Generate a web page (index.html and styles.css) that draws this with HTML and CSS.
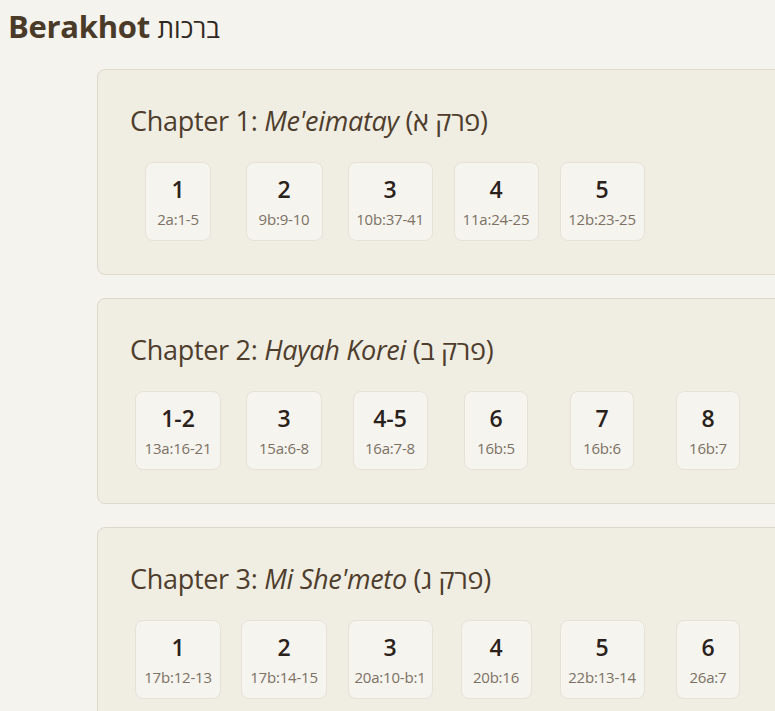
FILE: index.html
```html
<!DOCTYPE html>
<html lang="en">
<head>
<meta charset="utf-8">
<title>Berakhot</title>
<link rel="stylesheet" href="styles.css">
</head>
<body>
<div class="page">
  <h1 class="title">Berakhot <span class="title-he" lang="he">ברכות</span></h1>

  <section class="chapter">
    <h2 class="chapter-title">Chapter 1: <em>Me'eimatay</em> (<span lang="he">פרק א</span>)</h2>
    <div class="mishnayot">
      <a class="mishna w66"><span class="num">1</span><span class="ref">2a:1-5</span></a>
      <a class="mishna w77"><span class="num">2</span><span class="ref">9b:9-10</span></a>
      <a class="mishna w85"><span class="num">3</span><span class="ref">10b:37-41</span></a>
      <a class="mishna w85"><span class="num">4</span><span class="ref">11a:24-25</span></a>
      <a class="mishna w85"><span class="num">5</span><span class="ref">12b:23-25</span></a>
    </div>
  </section>

  <section class="chapter">
    <h2 class="chapter-title">Chapter 2: <em>Hayah Korei</em> (<span lang="he">פרק ב</span>)</h2>
    <div class="mishnayot">
      <a class="mishna w86"><span class="num">1-2</span><span class="ref">13a:16-21</span></a>
      <a class="mishna w76"><span class="num">3</span><span class="ref">15a:6-8</span></a>
      <a class="mishna w75"><span class="num">4-5</span><span class="ref">16a:7-8</span></a>
      <a class="mishna w64"><span class="num">6</span><span class="ref">16b:5</span></a>
      <a class="mishna w64"><span class="num">7</span><span class="ref">16b:6</span></a>
      <a class="mishna w64"><span class="num">8</span><span class="ref">16b:7</span></a>
    </div>
  </section>

  <section class="chapter">
    <h2 class="chapter-title">Chapter 3: <em>Mi She'meto</em> (<span lang="he">פרק ג</span>)</h2>
    <div class="mishnayot">
      <a class="mishna w86"><span class="num">1</span><span class="ref">17b:12-13</span></a>
      <a class="mishna w86"><span class="num">2</span><span class="ref">17b:14-15</span></a>
      <a class="mishna w85"><span class="num">3</span><span class="ref">20a:10-b:1</span></a>
      <a class="mishna w71"><span class="num">4</span><span class="ref">20b:16</span></a>
      <a class="mishna w85"><span class="num">5</span><span class="ref">22b:13-14</span></a>
      <a class="mishna w64"><span class="num">6</span><span class="ref">26a:7</span></a>
    </div>
  </section>
</div>
</body>
</html>
```

FILE: styles.css
```css
html {
  overflow: hidden;
}

body {
  margin: 0;
  background: #f5f3ee;
  font-family: "Open Sans", "Noto Sans", "DejaVu Sans", sans-serif;
  color: #4a3a2a;
}

.page {
  padding: 7px 8px 0;
}

.title {
  margin: 0 0 22px;
  font-size: 31px;
  line-height: 38px;
  letter-spacing: -0.3px;
  font-weight: 700;
  color: #4a3a28;
}

.title-he {
  font-weight: 400;
  font-size: 26px;
  letter-spacing: 0;
  color: #2e2822;
}

.chapter {
  width: 720px;
  margin: 0 0 23px 89px;
  padding: 34px 32px 33px;
  background: #f0ede3;
  border: 1px solid #dcd8cc;
  border-radius: 8px;
}

.chapter-title {
  margin: 0 0 24px;
  font-size: 27px;
  line-height: 34px;
  letter-spacing: -0.3px;
  font-weight: 400;
  color: #4e3d2c;
}

.chapter-title em {
  font-style: italic;
}

.mishnayot {
  display: grid;
  grid-template-columns: repeat(6, 96px);
  column-gap: 10px;
  justify-items: center;
}

.mishna {
  display: flex;
  flex-direction: column;
  align-items: center;
  box-sizing: border-box;
  padding: 12px 4px 11px;
  background: #f6f4ef;
  border: 1px solid #e6e2d8;
  border-radius: 8px;
  text-decoration: none;
}

.w64 { width: 64px; }
.w66 { width: 66px; }
.w71 { width: 71px; }
.w75 { width: 75px; }
.w76 { width: 76px; }
.w77 { width: 77px; }
.w85 { width: 85px; }
.w86 { width: 86px; }

.num {
  font-size: 23px;
  line-height: 28px;
  font-weight: 600;
  color: #2a211a;
  margin-bottom: 6px;
}

.ref {
  font-size: 15px;
  line-height: 20px;
  letter-spacing: -0.2px;
  color: #7c7164;
  white-space: nowrap;
}
```
